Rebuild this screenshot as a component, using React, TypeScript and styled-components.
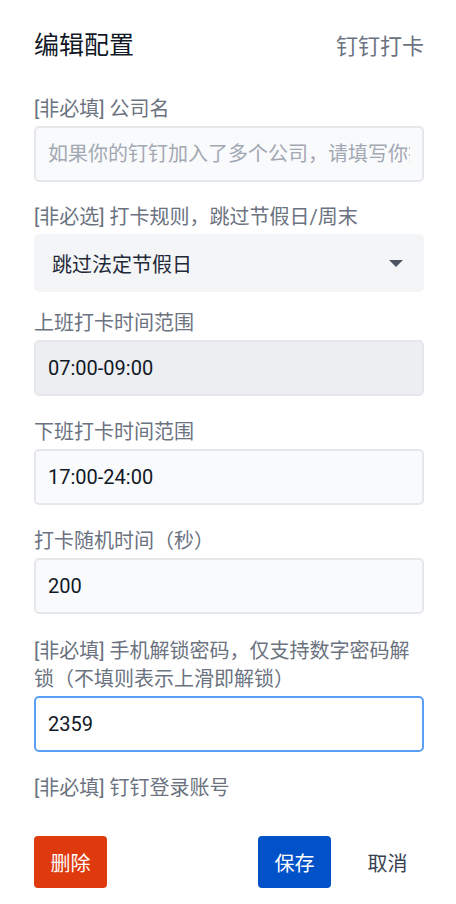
import React from "react";
import styled, { createGlobalStyle } from "styled-components";

const Global = createGlobalStyle`
  html, body { margin: 0; padding: 0; background: #ffffff; }
  body { font-family: Roboto, "Noto Sans", "Noto Sans CJK SC", sans-serif; }
  * { box-sizing: border-box; }
`;

const Page = styled.div`
  width: 456px;
  padding: 0 32px 0 34px;
  display: flex;
  flex-direction: column;
`;

const Header = styled.div`
  height: 86px;
  margin-bottom: 9px;
  display: flex;
  align-items: center;
  justify-content: space-between;
`;

const Title = styled.h1`
  margin: 0;
  font-size: 25px;
  font-weight: 400;
  color: #111827;
  font-family: Roboto, "Noto Sans CJK SC", sans-serif;
`;

const SubTitle = styled.span`
  font-size: 22px;
  color: #6b7280;
  margin-top: 2px;
  font-family: Roboto, "Noto Sans CJK SC", sans-serif;
`;

const Field = styled.div<{ $gap: number }>`
  display: flex;
  flex-direction: column;
  margin-bottom: ${(p) => p.$gap}px;
`;

const Label = styled.label`
  font-size: 20px;
  line-height: 28px;
  color: #6b7280;
  margin-bottom: 3px;
  font-family: Roboto, "Noto Sans CJK SC", sans-serif;
`;

const Input = styled.input<{ $focused?: boolean }>`
  height: 56px;
  width: 100%;
  border: 2px solid ${(p) => (p.$focused ? "#5b9ff5" : "#e5e7eb")};
  border-radius: 5px;
  background: ${(p) => (p.$focused ? "#ffffff" : "#f9fafb")};
  padding: 0 12px;
  font-size: 20px;
  color: #111827;
  font-family: Roboto, "Noto Sans CJK SC", sans-serif;
  outline: none;
  &::placeholder { color: #a2a8b3; }
  &:disabled { background: #eceef1; color: #111827; -webkit-text-fill-color: #111827; opacity: 1; }
`;

const Select = styled.div`
  height: 58px;
  border-radius: 5px;
  background: #f4f5f7;
  padding: 0 21px 0 18px;
  display: flex;
  align-items: center;
  justify-content: space-between;
  font-size: 20px;
  color: #1f2937;
  font-family: Roboto, "Noto Sans CJK SC", sans-serif;
`;

const Caret = styled.span`
  width: 0;
  height: 0;
  border-left: 7px solid transparent;
  border-right: 7px solid transparent;
  border-top: 7px solid #4b5563;
`;

const Actions = styled.div`
  margin-top: 31px;
  display: flex;
  align-items: center;
`;

const Spacer = styled.div`
  flex: 1;
`;

const Button = styled.button<{ $variant: "danger" | "primary" | "ghost" }>`
  height: 52px;
  min-width: 73px;
  padding: 0 16px;
  border: none;
  border-radius: 4px;
  font-size: 20px;
  font-family: Roboto, "Noto Sans CJK SC", sans-serif;
  background: ${(p) =>
    p.$variant === "danger" ? "#de3a0d" : p.$variant === "primary" ? "#0152c9" : "transparent"};
  color: ${(p) => (p.$variant === "ghost" ? "#374151" : "#ffffff")};
  margin-left: ${(p) => (p.$variant === "ghost" ? "20px" : "0")};
`;

export default function App() {
  return (
    <>
      <Global />
      <Page>
        <Header>
          <Title>编辑配置</Title>
          <SubTitle>钉钉打卡</SubTitle>
        </Header>

        <Field $gap={21}>
          <Label>[非必填] 公司名</Label>
          <Input placeholder="如果你的钉钉加入了多个公司，请填写你打卡的公司名" />
        </Field>

        <Field $gap={17}>
          <Label>[非必选] 打卡规则，跳过节假日/周末</Label>
          <Select>
            <span>跳过法定节假日</span>
            <Caret />
          </Select>
        </Field>

        <Field $gap={22}>
          <Label>上班打卡时间范围</Label>
          <Input disabled defaultValue="07:00-09:00" />
        </Field>

        <Field $gap={22}>
          <Label>下班打卡时间范围</Label>
          <Input defaultValue="17:00-24:00" />
        </Field>

        <Field $gap={23}>
          <Label>打卡随机时间（秒）</Label>
          <Input defaultValue="200" />
        </Field>

        <Field $gap={22}>
          <Label>[非必填] 手机解锁密码，仅支持数字密码解锁（不填则表示上滑即解锁）</Label>
          <Input $focused defaultValue="2359" />
        </Field>

        <Field $gap={0}>
          <Label>[非必填] 钉钉登录账号</Label>
        </Field>

        <Actions>
          <Button $variant="danger">删除</Button>
          <Spacer />
          <Button $variant="primary">保存</Button>
          <Button $variant="ghost">取消</Button>
        </Actions>
      </Page>
    </>
  );
}
